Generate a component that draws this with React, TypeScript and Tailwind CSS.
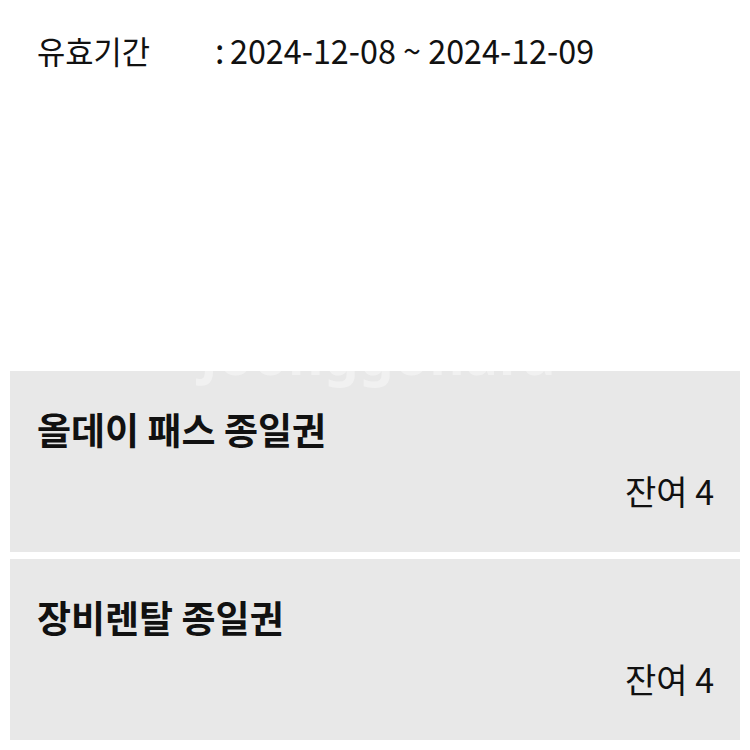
import * as React from 'react';

const FONT = "font-['Noto_Sans_CJK_KR','Noto_Sans',sans-serif]";

const tickets = [
  { id: 'allday', name: '올데이 패스 종일권', remain: 4 },
  { id: 'rental', name: '장비렌탈 종일권', remain: 4 },
];

const TicketCard: React.FC<{ name: string; remain: number }> = ({ name, remain }) => (
  <div className="h-[181px] bg-[#e8e8e8] flex flex-col pl-[27px] pr-[26px] pt-[35px]">
    <div className="text-[37px] leading-[46px] font-bold text-[#111]">{name}</div>
    <div className="mt-[19px] self-end text-[34px] leading-[40px] text-[#111]">잔여 {remain}</div>
  </div>
);

export default function App() {
  return (
    <div className={`relative w-[750px] h-[750px] bg-white overflow-hidden ${FONT}`}>
      {/* Validity period */}
      <div className="flex items-center pt-[28px] pl-[37px] text-[#111] h-[72px]">
        <span className="w-[178px] text-[32px] leading-[40px] scale-x-[0.96] origin-left whitespace-nowrap">
          유효기간
        </span>
        <span className="w-[15px] text-[34px] leading-[40px]">:</span>
        <span className="inline-block text-[34px] leading-[40px] scale-x-[0.95] origin-left whitespace-nowrap">
          2024-12-08 ~ 2024-12-09
        </span>
      </div>

      {/* Ticket list */}
      <div className="mt-[299px] px-[10px] flex flex-col gap-[7px]">
        {tickets.map((t) => (
          <TicketCard key={t.id} name={t.name} remain={t.remain} />
        ))}
      </div>

      {/* faint watermark */}
      <div className="absolute left-[200px] top-[322px] text-[54px] leading-[64px] font-bold text-white/40 pointer-events-none font-['Noto_Sans',sans-serif] tracking-[1px]">
        Joonggonara
      </div>
    </div>
  );
}
